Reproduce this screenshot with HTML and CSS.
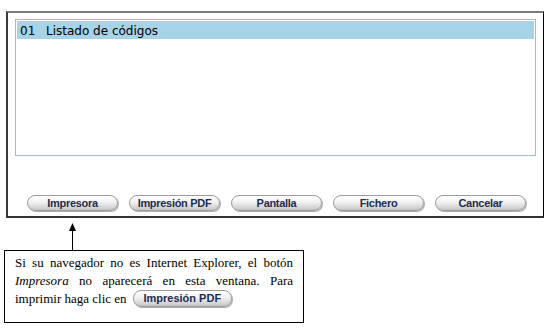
FILE: index.html
```html
<!DOCTYPE html>
<html lang="es">
<head>
    <meta charset="UTF-8">
    <title>Listado de códigos</title>
    <link rel="stylesheet" href="styles.css">
</head>
<body>

    <div class="frame">
        <div class="list-box">
            <div class="list-item selected"><span class="code">01</span>Listado de códigos</div>
        </div>
        <div class="buttons">
            <button class="pill">Impresora</button>
            <button class="pill">Impresión PDF</button>
            <button class="pill">Pantalla</button>
            <button class="pill">Fichero</button>
            <button class="pill">Cancelar</button>
        </div>
    </div>

    <div class="arrow">
        <svg width="9" height="29" viewBox="0 0 9 29">
            <polygon points="4.5,0 8,8 1,8" fill="#000"/>
            <rect x="4" y="7" width="1" height="22" fill="#000"/>
        </svg>
    </div>

    <div class="note">
        Si su navegador no es Internet Explorer, el botón <i>Impresora</i> no aparecerá en esta ventana. Para imprimir haga clic en <span class="pill pill-inline">Impresión PDF</span>
    </div>

</body>
</html>
```

FILE: styles.css
```css
body {
    margin: 0;
    background: #fff;
    font-family: "DejaVu Sans", Verdana, sans-serif;
}
.frame {
    margin: 11px 0 0 6px;
    width: 538px;
    height: 207px;
    border-top: 2px solid #7a7a7a;
    border-left: 2px solid #3a3a3a;
    border-right: 1px solid #000;
    border-bottom: 2px solid #333;
    padding: 6px 0 0 7px;
    box-sizing: border-box;
}
.list-box {
    width: 521px;
    height: 137px;
    border: 1px solid #9dbccc;
    padding: 1px;
    box-sizing: border-box;
}
.list-item {
    height: 18px;
    line-height: 16px;
    padding: 2px 0 0 3px;
    box-sizing: border-box;
    font-size: 12px;
    color: #000;
}
.code {
    display: inline-block;
    width: 26px;
}
.selected {
    background: #a6d3e5;
}
.buttons {
    display: flex;
    gap: 11px;
    margin: 39px 0 0 12px;
}
.pill {
    width: 91px;
    height: 16px;
    padding: 0;
    border: 1px solid #9c9c9c;
    border-radius: 8px;
    background: linear-gradient(#ffffff, #f0f0f0 45%, #d6d6d6 80%, #c4c4c4);
    box-shadow: 1px 1px 0 #b0b0b0;
    font-family: "Liberation Sans", Arial, sans-serif;
    font-weight: bold;
    font-size: 11px;
    letter-spacing: -0.3px;
    color: #1e2c50;
    line-height: 14px;
    text-align: center;
    box-sizing: border-box;
}
.pill-inline {
    display: inline-block;
    width: 99px;
    height: 17px;
    line-height: 15px;
    letter-spacing: 0;
    vertical-align: 1px;
    margin-left: 3px;
}
.arrow {
    margin: 5px 0 0 68px;
    height: 27px;
    overflow: hidden;
}
.arrow svg {
    display: block;
}
.note {
    margin-left: 4px;
    width: 300px;
    height: 73px;
    border: 1px solid #000;
    box-sizing: border-box;
    padding: 3px 10px 0 10px;
    font-family: "Liberation Serif", "Times New Roman", serif;
    font-size: 13px;
    line-height: 18px;
    text-align: justify;
    color: #000;
}
```
